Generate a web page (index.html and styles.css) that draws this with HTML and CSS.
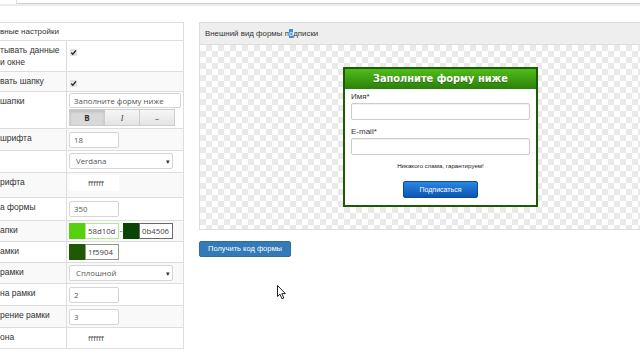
FILE: index.html
```html
<!DOCTYPE html>
<html lang="ru">
<head>
  <meta charset="UTF-8">
  <title>Конструктор формы подписки</title>
  <link rel="stylesheet" href="styles.css">
</head>
<body>
  <div class="topbar"><div class="topbar-box"></div></div>

  <div class="page">
    <!-- Settings panel -->
    <div class="settings">
      <div class="settings-title">вные настройки</div>

      <div class="row h31">
        <div class="lbl">тывать данные<br>и окне</div>
        <div class="val"><span class="check"><svg width="7" height="7" viewBox="0 0 7 7"><path d="M1.2 3.6 L2.8 5.2 L5.9 1.3" fill="none" stroke="#222" stroke-width="1.3"/></svg></span></div>
      </div>
      <div class="row h20">
        <div class="lbl">вать шапку</div>
        <div class="val"><span class="check"><svg width="7" height="7" viewBox="0 0 7 7"><path d="M1.2 3.6 L2.8 5.2 L5.9 1.3" fill="none" stroke="#222" stroke-width="1.3"/></svg></span></div>
      </div>
      <div class="row h37">
        <div class="lbl">шапки</div>
        <div class="val">
          <div class="field wide">Заполните форму ниже</div>
          <div class="btn-group">
            <span class="tbtn active"><b>B</b></span>
            <span class="tbtn"><i>I</i></span>
            <span class="tbtn">&ndash;</span>
          </div>
        </div>
      </div>
      <div class="row h22">
        <div class="lbl">шрифта</div>
        <div class="val"><div class="field short">18</div></div>
      </div>
      <div class="row h22">
        <div class="lbl"></div>
        <div class="val"><div class="select"><span>Verdana</span><span class="arrow">&#9662;</span></div></div>
      </div>
      <div class="row h25">
        <div class="lbl">рифта</div>
        <div class="val"><div class="color"><span class="swatch" style="background:#ffffff"></span><span class="hex" style="border-color:#ffffff">ffffff</span></div></div>
      </div>
      <div class="row h23">
        <div class="lbl">а формы</div>
        <div class="val"><div class="field short">350</div></div>
      </div>
      <div class="row h21">
        <div class="lbl">апки</div>
        <div class="val">
          <div class="color"><span class="swatch" style="background:#58d10d"></span><span class="hex" style="border-color:#b5e696">58d10d</span></div>
          <span class="dash">-</span>
          <div class="color"><span class="swatch" style="background:#0b4506"></span><span class="hex" style="border-color:#6a6a6a">0b4506</span></div>
        </div>
      </div>
      <div class="row h21">
        <div class="lbl">амки</div>
        <div class="val"><div class="color"><span class="swatch" style="background:#1f5904"></span><span class="hex" style="border-color:#8f9a8a">1f5904</span></div></div>
      </div>
      <div class="row h21">
        <div class="lbl">рамки</div>
        <div class="val"><div class="select"><span>Сплошной</span><span class="arrow">&#9662;</span></div></div>
      </div>
      <div class="row h22">
        <div class="lbl">на рамки</div>
        <div class="val"><div class="field short">2</div></div>
      </div>
      <div class="row h22">
        <div class="lbl">рение рамки</div>
        <div class="val"><div class="field short">3</div></div>
      </div>
      <div class="row h21">
        <div class="lbl">она</div>
        <div class="val"><div class="color"><span class="swatch" style="background:#ffffff"></span><span class="hex" style="border-color:#ffffff">ffffff</span></div></div>
      </div>
    </div>

    <!-- Preview -->
    <div class="right">
      <div class="preview">
        <div class="preview-title">Внешний вид формы п<span class="sel">о</span>дписки</div>
        <div class="preview-body">
          <div class="sub-form">
            <div class="sub-head">Заполните форму ниже</div>
            <div class="sub-body">
              <div class="sub-label">Имя*</div>
              <div class="sub-input"></div>
              <div class="sub-label second">E-mail*</div>
              <div class="sub-input"></div>
              <div class="sub-note">Никакого спама, гарантируем!</div>
              <div class="sub-btn">Подписаться</div>
            </div>
          </div>
        </div>
      </div>
      <div class="get-code">Получить код формы</div>
    </div>
  </div>

  <svg class="cursor" width="10" height="15" viewBox="0 0 10 15">
    <path d="M0.5 0.5 L0.5 11.5 L3 9.2 L5 13.8 L6.8 13 L4.9 8.6 L8.4 8.6 Z" fill="#fff" stroke="#222" stroke-width="1"/>
  </svg>
</body>
</html>
```

FILE: styles.css
```css
* {
    margin: 0;
    padding: 0;
    box-sizing: border-box;
}

body {
    width: 640px;
    height: 360px;
    overflow: hidden;
    background: #fff;
    font-family: 'Liberation Sans', Arial, sans-serif;
    font-size: 8.5px;
    color: #333;
    position: relative;
}

/* top strip */
.topbar {
    height: 6px;
    border-bottom: 2px solid #ececec;
}

.topbar-box {
    margin-left: 16px;
    height: 4px;
    border-left: 1px solid #ddd;
    border-bottom: 1px solid #cfcfcf;
}

.page {
    display: flex;
    align-items: flex-start;
    gap: 15px;
    padding-top: 16px;
}

/* Settings panel */
.settings {
    width: 184px;
    flex: none;
    border: 1px solid #ddd;
    border-left: none;
}

.settings-title {
    height: 17px;
    line-height: 17px;
    font-size: 8px;
}

.row {
    display: grid;
    grid-template-columns: 67px 1fr;
    border-top: 1px solid #ddd;
}

.row:nth-of-type(odd) {
    background: #f9f9f9;
}

.h20 { height: 20px; }
.h21 { height: 21px; }
.h22 { height: 22px; }
.h23 { height: 23px; }
.h25 { height: 25px; }
.h31 { height: 31px; }
.h37 { height: 37px; }

.lbl {
    border-right: 1px solid #ddd;
    padding-top: 3px;
    line-height: 12px;
    white-space: nowrap;
    overflow: hidden;
}

.val {
    padding: 1px 2px;
    display: flex;
    flex-wrap: wrap;
    align-items: flex-start;
    align-content: flex-start;
    font-family: 'Open Sans', 'Liberation Sans', sans-serif;
}

.check {
    display: block;
    width: 7px;
    height: 7px;
    margin: 7px 0 0 1px;
    background: #e2e2e2;
    border-radius: 1px;
}

.check svg {
    display: block;
}

.field {
    height: 16px;
    line-height: 14px;
    border: 1px solid #d5d5d5;
    border-radius: 2px;
    background: #fff;
    color: #555;
    font-size: 7.8px;
    padding-left: 4px;
    margin-top: 1px;
}

.field.wide {
    width: 112px;
    height: 15px;
    margin-top: 0;
}

.field.short {
    width: 50px;
    margin-top: 2px;
}

.btn-group {
    display: flex;
    margin-top: 1px;
}

.tbtn {
    width: 36px;
    height: 17px;
    line-height: 15px;
    text-align: center;
    border: 1px solid #ccc;
    margin-right: -1px;
    background: linear-gradient(#f6f6f6, #e4e4e4);
    font-size: 8px;
    color: #333;
}

.tbtn.active {
    background: #d9d9d9;
    box-shadow: inset 0 2px 3px rgba(0, 0, 0, 0.12);
}

.tbtn i {
    font-family: 'Liberation Serif', serif;
}

.select {
    width: 104px;
    height: 16px;
    margin-top: 1px;
    border: 1px solid #d5d5d5;
    border-radius: 2px;
    background: #fff;
    display: flex;
    justify-content: space-between;
    align-items: center;
    padding: 0 2px 0 6px;
    font-size: 7.8px;
    color: #555;
}

.select .arrow {
    font-size: 7px;
    color: #333;
}

.color {
    display: flex;
    height: 16px;
    margin-top: 1px;
}

.swatch {
    width: 16px;
    height: 16px;
}

.hex {
    width: 34px;
    border: 1px solid #ccc;
    background: #fff;
    font-size: 7.8px;
    line-height: 14px;
    padding-left: 2px;
    color: #444;
}

.dash {
    width: 4px;
    line-height: 16px;
    text-align: center;
    font-size: 8px;
}

/* Preview */
.right {
    flex: none;
    width: 483px;
}

.preview {
    border: 1px solid #ddd;
}

.preview-title {
    height: 22px;
    line-height: 21px;
    padding-left: 5px;
    font-size: 7.9px;
    background: #eeeeee;
    border-bottom: 1px solid #ddd;
}

.sel {
    background: #3d8ee0;
    color: #fff;
}

.preview-body {
    display: flex;
    justify-content: center;
    padding: 22px 0 22px;
    background-color: #fff;
    background-image:
        linear-gradient(45deg, #e9e9e9 25%, transparent 25%, transparent 75%, #e9e9e9 75%),
        linear-gradient(45deg, #e9e9e9 25%, transparent 25%, transparent 75%, #e9e9e9 75%);
    background-size: 12px 12px;
    background-position: 0 0, 6px 6px;
}

.sub-form {
    width: 195px;
    border: 2px solid #1f5904;
    background: #fff;
    font-family: 'Liberation Sans', Arial, sans-serif;
}

.sub-head {
    height: 20px;
    line-height: 20px;
    text-align: center;
    color: #fff;
    font-family: 'DejaVu Sans', Verdana, sans-serif;
    font-weight: bold;
    font-size: 9.8px;
    background: linear-gradient(#4fbf16, #2c7f0c);
    text-shadow: 0 1px 1px rgba(0, 0, 0, 0.3);
}

.sub-body {
    padding: 3px 6px 7px;
}

.sub-label {
    font-size: 8px;
    line-height: 10px;
    margin-bottom: 1px;
    color: #333;
}

.sub-label.second {
    margin-top: 7px;
}

.sub-input {
    height: 17px;
    border: 1px solid #ccc;
    border-radius: 2px;
    box-shadow: inset 0 1px 1px rgba(0, 0, 0, 0.06);
}

.sub-note {
    margin-top: 7px;
    font-size: 6.2px;
    line-height: 8px;
    text-align: center;
    color: #222;
}

.sub-btn {
    width: 75px;
    height: 17px;
    line-height: 15px;
    margin: 11px auto 0;
    text-align: center;
    color: #fff;
    font-size: 7px;
    border: 1px solid #0a4d9e;
    border-radius: 2px;
    background: linear-gradient(#2a86e2, #0b55b2);
}

.get-code {
    display: inline-block;
    margin-top: 11px;
    width: 92px;
    height: 16px;
    line-height: 14px;
    text-align: center;
    color: #fff;
    font-size: 7.5px;
    border: 1px solid #2e6da4;
    border-radius: 2px;
    background: #337ab7;
}

/* mouse pointer sits over the page */
.cursor {
    position: absolute;
    left: 277px;
    top: 285px;
}
```
